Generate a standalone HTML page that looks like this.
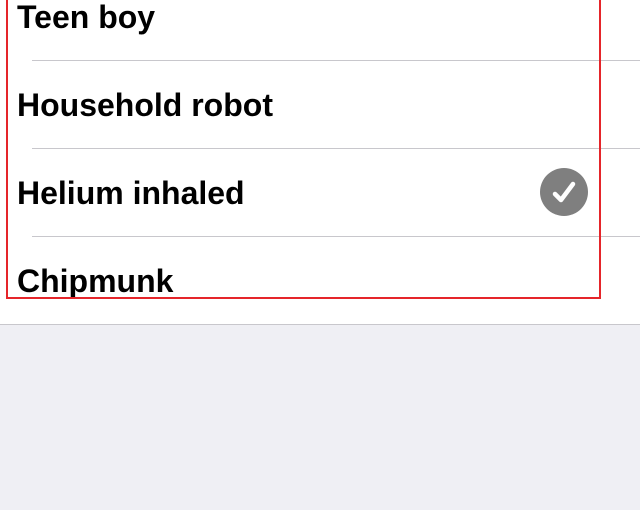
<!DOCTYPE html>
<html><head><style>
html,body{margin:0;padding:0;width:640px;height:510px;overflow:hidden;background:#efeff4;}
.w{position:absolute;left:0;top:0;width:640px;height:324px;background:#fff;border-bottom:1px solid #c8c7cc;}
.t{position:absolute;left:17px;font:bold 32px "Liberation Sans",sans-serif;color:#000;line-height:1;}
.s{position:absolute;left:32px;right:0;height:1px;background:#c8c7cc;}
.r{position:absolute;left:6px;top:-10px;width:591px;height:305px;border:2px solid #e5252a;}
</style></head><body>
<div class="w">
<div class="t" style="top:1px">Teen boy</div>
<div class="s" style="top:60px"></div>
<div class="t" style="top:89px">Household robot</div>
<div class="s" style="top:148px"></div>
<div class="t" style="top:177px">Helium inhaled</div>
<div class="s" style="top:236px"></div>
<div class="t" style="top:265px">Chipmunk</div>
<svg style="position:absolute;left:540px;top:168px" width="48" height="48" viewBox="0 0 48 48"><circle cx="24" cy="24" r="24" fill="#7f7f7f"/><path d="M15 26 L21 32 L33 16" stroke="#fff" stroke-width="4.5" fill="none" stroke-linecap="round" stroke-linejoin="round"/></svg>
<div class="r"></div>
</div>
</body></html>
